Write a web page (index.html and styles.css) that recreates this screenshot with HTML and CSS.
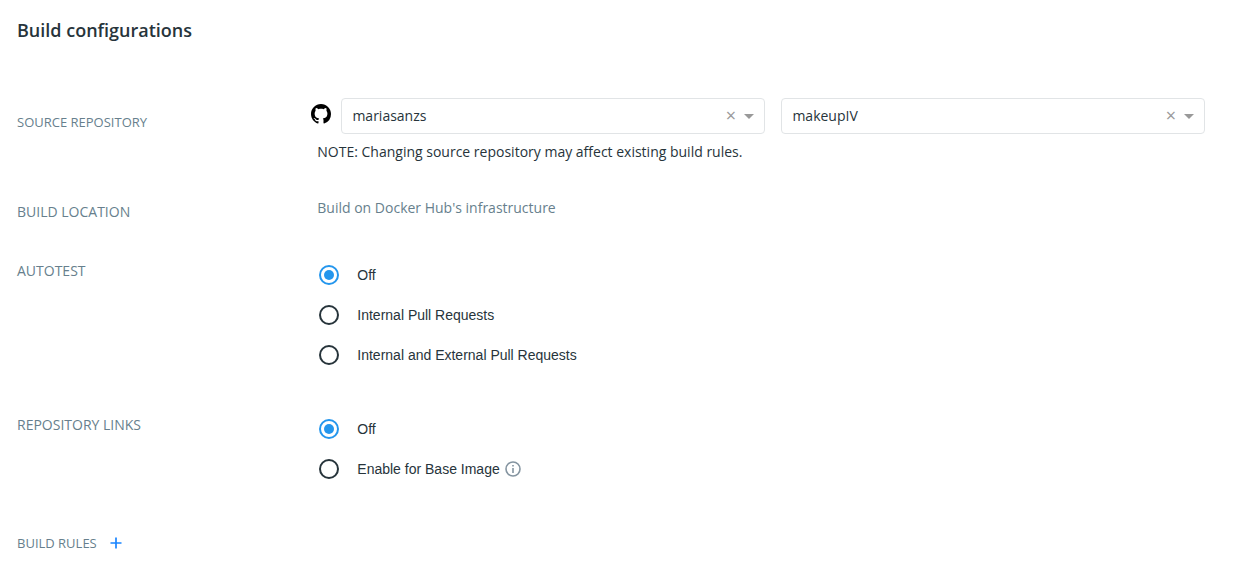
FILE: index.html
```html
<!DOCTYPE html>
<html lang="en">
<head>
<meta charset="utf-8">
<title>Build configurations</title>
<link rel="stylesheet" href="styles.css">
</head>
<body>
<main class="page">
  <h1 class="title">Build configurations</h1>

  <section class="row row-source">
    <div class="label label-small">SOURCE REPOSITORY</div>
    <div class="source">
      <div class="selects">
        <svg class="github" viewBox="0 0 16 16" width="20" height="20"><path d="M8 0C3.58 0 0 3.58 0 8c0 3.54 2.29 6.53 5.47 7.59.4.07.55-.17.55-.38 0-.19-.01-.82-.01-1.49-2.01.37-2.53-.49-2.69-.94-.09-.23-.48-.94-.82-1.13-.28-.15-.68-.52-.01-.53.63-.01 1.08.58 1.23.82.72 1.21 1.87.87 2.33.66.07-.52.28-.87.51-1.07-1.78-.2-3.64-.89-3.64-3.95 0-.87.31-1.59.82-2.15-.08-.2-.36-1.02.08-2.12 0 0 .67-.21 2.2.82.64-.18 1.32-.27 2-.27s1.36.09 2 .27c1.53-1.04 2.2-.82 2.2-.82.44 1.1.16 1.92.08 2.12.51.56.82 1.27.82 2.15 0 3.07-1.87 3.75-3.65 3.95.29.25.54.73.54 1.48 0 1.07-.01 1.93-.01 2.2 0 .21.15.46.55.38A8.01 8.01 0 0 0 16 8c0-4.42-3.58-8-8-8z"/></svg>
        <div class="select"><span class="value">mariasanzs</span><span class="clear">×</span><span class="arrow"></span></div>
        <div class="select"><span class="value">makeupIV</span><span class="clear">×</span><span class="arrow"></span></div>
      </div>
      <p class="note">NOTE: Changing source repository may affect existing build rules.</p>
    </div>
  </section>

  <section class="row row-location">
    <div class="label">BUILD LOCATION</div>
    <div class="location">Build on Docker Hub's infrastructure</div>
  </section>

  <section class="row row-autotest">
    <div class="label">AUTOTEST</div>
    <div class="options">
      <div class="option"><span class="radio checked"></span>Off</div>
      <div class="option"><span class="radio"></span>Internal Pull Requests</div>
      <div class="option"><span class="radio"></span>Internal and External Pull Requests</div>
    </div>
  </section>

  <section class="row row-links">
    <div class="label">REPOSITORY LINKS</div>
    <div class="options">
      <div class="option"><span class="radio checked"></span>Off</div>
      <div class="option"><span class="radio"></span>Enable for Base Image
        <svg class="info" viewBox="0 0 16 16" width="16" height="16"><circle cx="8" cy="8" r="7"/><path d="M8 7v5M8 4v1.6"/></svg>
      </div>
    </div>
  </section>

  <section class="rules">
    <div class="label label-small">BUILD RULES</div>
    <svg class="plus" viewBox="0 0 12 12" width="12" height="12"><path d="M6 .5v11M.5 6h11"/></svg>
  </section>
</main>
</body>
</html>
```

FILE: styles.css
```css
* { box-sizing: border-box; }
body {
  margin: 0;
  background: #fff;
  color: #27343b;
  font: 14px/20px "Open Sans", sans-serif;
}
.page { height: 565px; padding: 18px 30px 0 17px; overflow: hidden; }
.title { margin: 0; height: 80px; font-size: 18px; line-height: 25px; font-weight: 600; }
.row { display: grid; grid-template-columns: 294px 1fr; }
.label { color: #677f8d; }
.label-small { font-size: 13px; }
.row-source { height: 100px; }
.row-source .label { padding-top: 14px; }
.selects { display: flex; gap: 16px; }
.github { flex: none; margin: 6px -6px 0 0; }
.select {
  display: flex;
  flex: none;
  align-items: center;
  width: 424px;
  height: 36px;
  padding: 0 10px 0 10.4px;
  border: 1px solid #e1e4e6;
  border-radius: 4px;
}
.value { flex: 1; }
.clear { width: 17px; padding: 0 0 2px 0.6px; text-align: center; color: #999; font-size: 18px; line-height: 18px; }
.arrow { margin-left: 5px; border: 5px solid transparent; border-top-color: #999; border-bottom: 0; }
.note { margin: 8px 0 0 6.3px; }
.row-location { height: 57px; }
.row-location .label { padding-top: 4px; }
.location { padding-left: 6.3px; color: #677f8d; }
.row-autotest { height: 154px; }
.row-links { height: 124px; }
.row-autotest .label, .row-links .label { padding-top: 6px; }
.options { padding-left: 8px; }
.option {
  display: flex;
  align-items: center;
  height: 40px;
  font-family: "Liberation Sans", Arial, sans-serif;
  font-size: 14px;
}
.radio {
  display: grid;
  place-items: center;
  width: 20px;
  height: 20px;
  margin-right: 18.3px;
  border: 2px solid #27343b;
  border-radius: 50%;
}
.checked { border-color: #2496ed; }
.checked::after { content: ""; width: 10px; height: 10px; border-radius: 50%; background: #2496ed; }
.info { margin-left: 5.5px; fill: none; stroke: #8494a0; stroke-width: 1.6; }
.rules { display: flex; align-items: center; gap: 13px; height: 20px; }
.plus { stroke: #1a85ff; stroke-width: 1.7; }
```
